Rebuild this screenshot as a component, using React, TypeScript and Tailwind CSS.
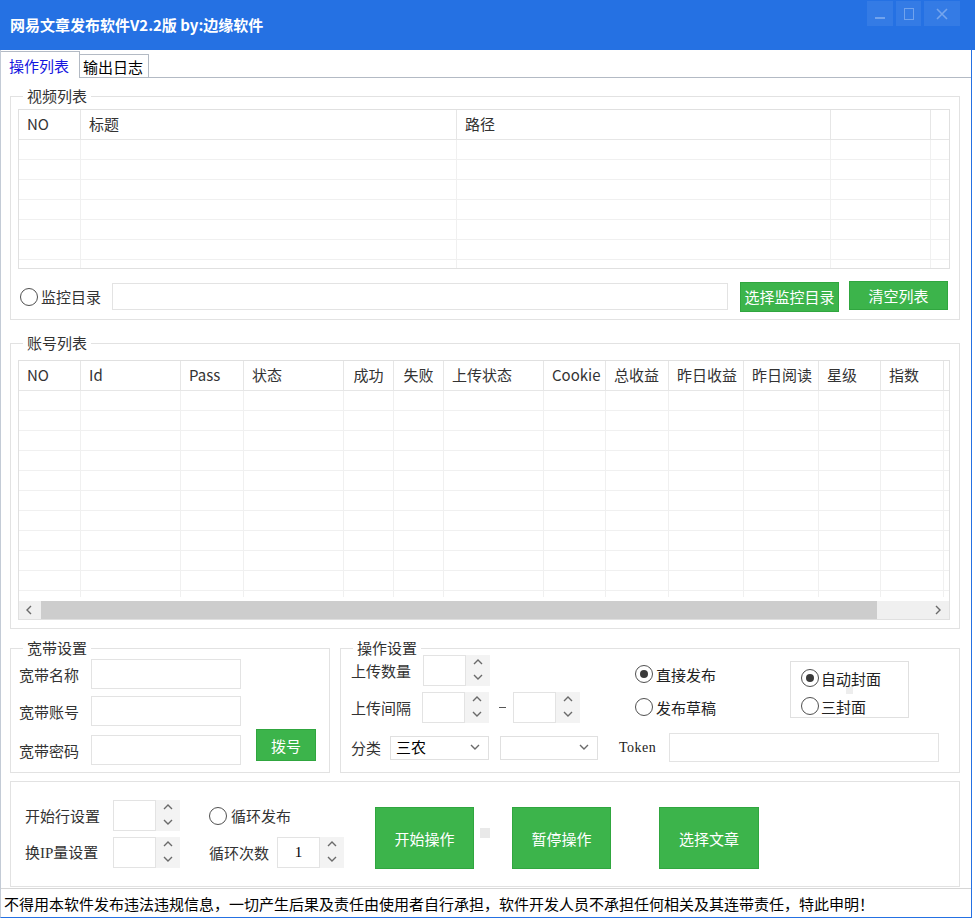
import React from "react";

type Col = { cls: string; label: string; center?: boolean };

const videoCols: Col[] = [
  { cls: "w-[62px]", label: "NO" },
  { cls: "w-[376px]", label: "标题" },
  { cls: "w-[374px]", label: "路径" },
  { cls: "w-[100px]", label: "" },
  { cls: "flex-1", label: "" },
];

const accountCols: Col[] = [
  { cls: "w-[62px]", label: "NO" },
  { cls: "w-[100px]", label: "Id" },
  { cls: "w-[63px]", label: "Pass" },
  { cls: "w-[100px]", label: "状态" },
  { cls: "w-[50px]", label: "成功", center: true },
  { cls: "w-[50px]", label: "失败", center: true },
  { cls: "w-[100px]", label: "上传状态" },
  { cls: "w-[62px]", label: "Cookie" },
  { cls: "w-[63px]", label: "总收益" },
  { cls: "w-[75px]", label: "昨日收益" },
  { cls: "w-[75px]", label: "昨日阅读" },
  { cls: "w-[62px]", label: "星级" },
  { cls: "w-[63px]", label: "指数" },
  { cls: "flex-1", label: "" },
];

const btn =
  "flex items-center justify-center bg-[#3cb44b] border border-[#30a63f] text-white text-[15px] leading-none shrink-0";

function Chev({ dir }: { dir: "up" | "down" | "left" | "right" }) {
  const pts = {
    up: "1,6 5,2 9,6",
    down: "1,2 5,6 9,2",
    left: "6,1 2,5 6,9",
    right: "3,1 7,5 3,9",
  }[dir];
  return (
    <svg width="10" height="10" viewBox="0 0 10 10">
      <polyline points={pts} fill="none" stroke="#6a6a6a" strokeWidth="1.4" />
    </svg>
  );
}

function Radio({ checked = false }: { checked?: boolean }) {
  return (
    <span className="w-[18px] h-[18px] rounded-full border-[1.5px] border-[#505050] bg-white flex items-center justify-center shrink-0">
      {checked && <span className="w-[8px] h-[8px] rounded-full bg-[#3a3a3a]" />}
    </span>
  );
}

function Spinner({ value = "", h = "h-[31px]" }: { value?: string; h?: string }) {
  return (
    <div className={`flex shrink-0 ${h}`}>
      <div className="w-[43px] h-full border border-[#e3e3e3] bg-white flex items-center justify-center font-['Liberation_Serif',serif] text-[15px] text-black">
        {value}
      </div>
      <div className="w-[24px] h-full bg-[#f3f3f3] flex flex-col">
        <div className="flex-1 flex items-center justify-center">
          <Chev dir="up" />
        </div>
        <div className="flex-1 flex items-center justify-center">
          <Chev dir="down" />
        </div>
      </div>
    </div>
  );
}

function Select({ value = "", w }: { value?: string; w: string }) {
  return (
    <div className={`${w} h-[24px] border border-[#e0e0e0] bg-white flex items-center justify-between pl-[5px] pr-[8px] text-[15px] text-black shrink-0`}>
      <span>{value}</span>
      <Chev dir="down" />
    </div>
  );
}

function Group({ label, className, children }: { label?: string; className: string; children: React.ReactNode }) {
  return (
    <div className={`relative border border-[#e2e2e2] shrink-0 ${className}`}>
      {label && (
        <span className="absolute left-[12px] top-[-10px] bg-white px-[4px] leading-[18px] text-[15px] text-[#333]">
          {label}
        </span>
      )}
      {children}
    </div>
  );
}

function HeaderRow({ cols }: { cols: Col[] }) {
  return (
    <div className="flex h-[30px] border-b border-[#e6e6e6] shrink-0">
      {cols.map((c, i) => (
        <div
          key={i}
          className={`${c.cls} shrink-0 h-full border-r border-[#e6e6e6] last:border-r-0 flex items-center overflow-hidden whitespace-nowrap text-[15px] text-[#333] ${
            c.center ? "justify-center" : "pl-[8px]"
          }`}
        >
          {c.label}
        </div>
      ))}
    </div>
  );
}

function BodyRows({ cols, n }: { cols: Col[]; n: number }) {
  return (
    <>
      {Array.from({ length: n }).map((_, r) => (
        <div key={r} className="flex h-[20px] border-b border-[#f0f0f0] shrink-0">
          {cols.map((c, i) => (
            <div key={i} className={`${c.cls} shrink-0 h-full border-r border-[#f0f0f0] last:border-r-0`} />
          ))}
        </div>
      ))}
    </>
  );
}

function TitleBar() {
  return (
    <div className="w-[975px] h-[50px] bg-[#2571e3] flex items-start shrink-0">
      <div className="mt-[15px] ml-[10px] text-white font-bold text-[15px] leading-[20px]">
        网易文章发布软件V2.2版 by:边缘软件
      </div>
      <div className="ml-auto mr-[15px] mt-[1px] flex gap-[3px]">
        <div className="w-[26px] h-[25px] bg-white/[0.07] flex items-end justify-center pb-[7px]">
          <div className="w-[10px] h-[2px] bg-white/30" />
        </div>
        <div className="w-[25px] h-[25px] bg-white/[0.07] flex items-center justify-center">
          <div className="w-[10px] h-[12px] border-[1.5px] border-white/30" />
        </div>
        <div className="w-[36px] h-[25px] bg-white/[0.07] flex items-center justify-center">
          <svg width="12" height="12" viewBox="0 0 12 12">
            <path d="M1 1 L11 11 M11 1 L1 11" stroke="rgba(255,255,255,0.32)" strokeWidth="1.6" />
          </svg>
        </div>
      </div>
    </div>
  );
}

function Tabs() {
  return (
    <div className="h-[28px] flex items-end border-b border-[#b3bac4] shrink-0">
      <div className="w-[79px] h-[27px] -mb-px bg-white border border-b-0 border-[#b3bac4] border-l-0 flex items-center pl-[8px] text-[15px] text-[#1515e0] leading-none">
        操作列表
      </div>
      <div className="w-[69px] h-[23px] bg-white border border-b-0 border-l-0 border-[#b3bac4] flex items-center pl-[3px] text-[15px] text-black leading-none">
        输出日志
      </div>
    </div>
  );
}

export default function App() {
  return (
    <div className="w-[975px] h-[920px] bg-white font-['Noto_Sans_CJK_SC',sans-serif] overflow-hidden">
      <TitleBar />
      <div className="w-[972px] flex flex-col border-r border-b border-[#2571e3] border-l border-l-[#c3cbd6]">
        <Tabs />

        {/* tab page */}
        <div className="h-[810px] pl-[9px] pt-[18px] flex flex-col">
          {/* 视频列表 */}
          <Group label="视频列表" className="w-[950px] h-[224px] pt-[12px] pl-[7px]">
            <div className="w-[932px] h-[160px] border border-[#e0e0e0] flex flex-col overflow-hidden">
              <HeaderRow cols={videoCols} />
              <div className="flex-1 overflow-hidden">
                <BodyRows cols={videoCols} n={7} />
              </div>
            </div>
            <div className="flex items-center h-[31px] mt-[12px]">
              <span className="ml-[2px]">
                <Radio />
              </span>
              <span className="ml-[3px] text-[15px] text-[#333] leading-none">监控目录</span>
              <div className="ml-[11px] w-[616px] h-[27px] border border-[#e3e3e3] bg-white" />
              <div className={`${btn} ml-[12px] w-[99px] h-[30px]`}>选择监控目录</div>
              <div className={`${btn} ml-[10px] w-[99px] h-[29px] -mt-[2px]`}>清空列表</div>
            </div>
          </Group>

          {/* 账号列表 */}
          <Group label="账号列表" className="w-[950px] h-[286px] mt-[23px] pt-[16px] pl-[7px]">
            <div className="w-[932px] h-[260px] border border-[#e0e0e0] flex flex-col overflow-hidden">
              <HeaderRow cols={accountCols} />
              <div className="h-[206px] overflow-hidden shrink-0">
                <BodyRows cols={accountCols} n={11} />
              </div>
              <div className="flex h-[18px] mt-[4px] bg-[#f0f0f0] shrink-0">
                <div className="w-[22px] flex items-center justify-center">
                  <Chev dir="left" />
                </div>
                <div className="w-[836px] bg-[#cdcdcd]" />
                <div className="flex-1" />
                <div className="w-[22px] flex items-center justify-center">
                  <Chev dir="right" />
                </div>
              </div>
            </div>
          </Group>

          <div className="flex mt-[19px] gap-[10px]">
            {/* 宽带设置 */}
            <Group label="宽带设置" className="w-[320px] h-[125px] pt-[10px] pl-[8px]">
              <div className="flex items-end">
                <div className="flex flex-col">
                  {[
                    ["宽带名称", "mt-0"],
                    ["宽带账号", "mt-[7px]"],
                    ["宽带密码", "mt-[9px]"],
                  ].map(([l, m]) => (
                    <div key={l} className={`flex items-center h-[30px] ${m}`}>
                      <span className="w-[72px] text-[15px] text-[#333] leading-none">{l}</span>
                      <div className="w-[150px] h-[30px] border border-[#e3e3e3] bg-white" />
                    </div>
                  ))}
                </div>
                <div className={`${btn} ml-[15px] mb-[4px] w-[60px] h-[32px]`}>拨号</div>
              </div>
            </Group>

            {/* 操作设置 */}
            <Group label="操作设置" className="w-[620px] h-[125px] pt-[6px] pl-[10px]">
              <div className="flex">
                <div className="w-[229px] flex flex-col shrink-0">
                  <div className="flex items-center h-[31px]">
                    <span className="w-[72px] text-[15px] text-[#333] leading-none">上传数量</span>
                    <Spinner />
                  </div>
                  <div className="flex items-center h-[31px] mt-[6px]">
                    <span className="w-[72px] text-[15px] text-[#333] leading-none">上传间隔</span>
                    <Spinner />
                    <span className="ml-[10px] w-[7px] h-px bg-[#555]" />
                    <span className="ml-[7px]">
                      <Spinner />
                    </span>
                  </div>
                </div>
                <div className="ml-[55px] w-[155px] shrink-0 flex flex-col pt-[9px]">
                  <div className="flex items-center h-[20px]">
                    <Radio checked />
                    <span className="ml-[3px] text-[15px] text-[#222] leading-none">直接发布</span>
                  </div>
                  <div className="flex items-center h-[20px] mt-[13px]">
                    <Radio />
                    <span className="ml-[3px] text-[15px] text-[#222] leading-none">发布草稿</span>
                  </div>
                </div>
                <div className="relative mt-[6px] w-[119px] h-[57px] border border-[#e0e0e0] pl-[10px] pt-[6px] shrink-0">
                  <div className="flex items-center h-[20px]">
                    <Radio checked />
                    <span className="ml-[2px] text-[15px] text-[#222] leading-none">自动封面</span>
                  </div>
                  <div className="flex items-center h-[20px] mt-[8px]">
                    <Radio />
                    <span className="ml-[2px] text-[15px] text-[#222] leading-none">三封面</span>
                  </div>
                  <span className="absolute left-[55px] top-[25px] w-[7px] h-[7px] bg-[#ededed]" />
                </div>
              </div>
              <div className="flex items-center h-[29px] mt-[10px]">
                <span className="w-[39px] text-[15px] text-[#333] leading-none">分类</span>
                <Select value="三农" w="w-[99px]" />
                <span className="ml-[11px]">
                  <Select w="w-[98px]" />
                </span>
                <span className="ml-[21px] w-[50px] font-['Liberation_Serif',serif] text-[14px] tracking-[0.5px] text-[#222]">Token</span>
                <div className="w-[270px] h-[29px] border border-[#e3e3e3] bg-white" />
              </div>
            </Group>
          </div>

          {/* 操作按钮 */}
          <Group className="w-[950px] h-[106px] mt-[8px] pt-[18px] pl-[14px]">
            <div className="flex items-start">
              <div className="flex flex-col w-[155px] shrink-0">
                <div className="flex items-center h-[31px]">
                  <span className="w-[88px] text-[15px] text-[#333] leading-none">开始行设置</span>
                  <Spinner />
                </div>
                <div className="flex items-center h-[31px] mt-[6px]">
                  <span className="w-[88px] text-[15px] text-[#333] leading-none">
                    换<span className="font-['Liberation_Serif',serif]">IP</span>量设置
                  </span>
                  <Spinner />
                </div>
              </div>
              <div className="flex flex-col ml-[29px] w-[135px] shrink-0">
                <div className="flex items-center h-[31px]">
                  <Radio />
                  <span className="ml-[4px] text-[15px] text-[#333] leading-none">循环发布</span>
                </div>
                <div className="flex items-center h-[31px] mt-[6px]">
                  <span className="w-[68px] text-[15px] text-[#333] leading-none">循环次数</span>
                  <Spinner value="1" />
                </div>
              </div>
              <div className={`${btn} ml-[31px] mt-[7px] w-[99px] h-[62px]`}>开始操作</div>
              <span className="ml-[6px] mt-[28px] w-[10px] h-[10px] bg-[#e9e9e9] shrink-0" />
              <div className={`${btn} ml-[22px] mt-[7px] w-[99px] h-[62px]`}>暂停操作</div>
              <div className={`${btn} ml-[48px] mt-[7px] w-[100px] h-[62px]`}>选择文章</div>
            </div>
          </Group>
        </div>

        {/* status bar */}
        <div className="h-[29px] border-t border-[#d6d6d6] flex items-center pl-[3px] text-[15px] text-black leading-none">
          不得用本软件发布违法违规信息，一切产生后果及责任由使用者自行承担，软件开发人员不承担任何相关及其连带责任，特此申明！
        </div>
      </div>
    </div>
  );
}
